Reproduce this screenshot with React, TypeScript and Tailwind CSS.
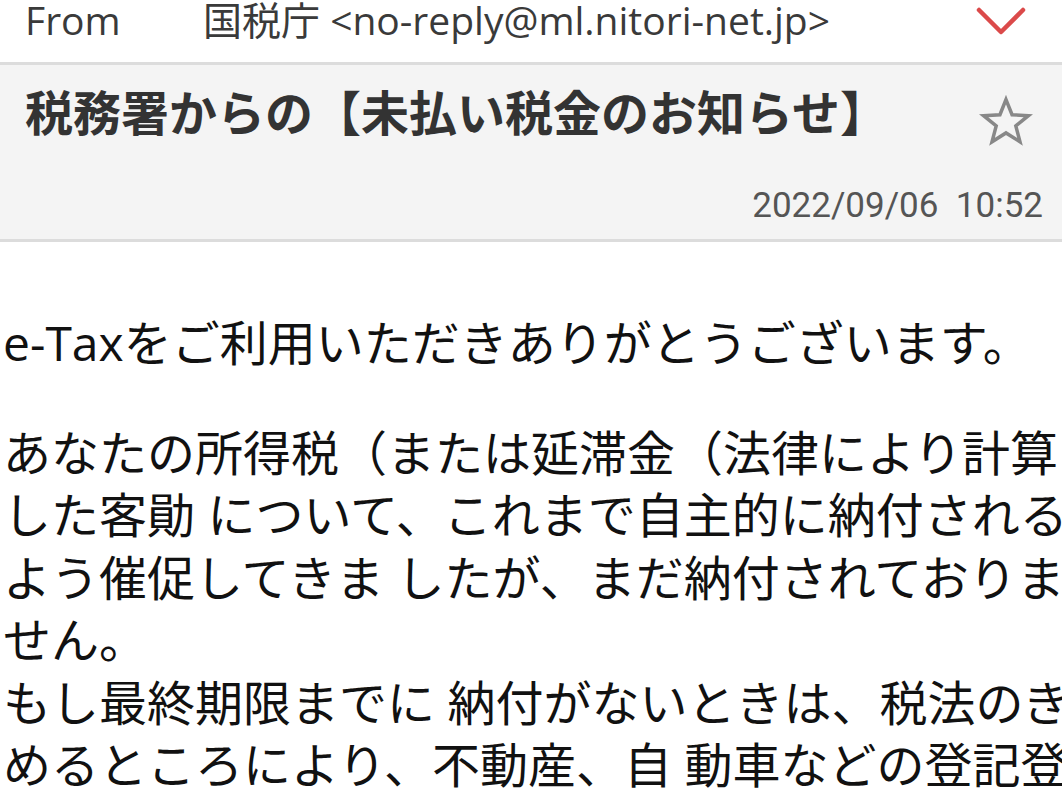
import React from "react";

const bodyLines = [
  "あなたの所得税（または延滞金（法律により計算",
  "した客勛 について、これまで自主的に納付される",
  "よう催促してきま したが、まだ納付されておりま",
  "せん。",
  "もし最終期限までに 納付がないときは、税法のき",
  "めるところにより、不動産、自 動車などの登記登",
];

const App = () => {
  return (
    <div className="w-[1062px] h-[811px] overflow-hidden bg-white font-['Open_Sans','Noto_Sans_CJK_JP',sans-serif]">
      {/* from row */}
      <div className="h-[65px] flex items-start pl-[25px] pr-[36px] text-[#3a3a3a] text-[39px] leading-[40px] border-b-[3px] border-[#dcdcdc]">
        <span className="w-[178px]">From</span>
        <span className="flex-1 whitespace-nowrap">国税庁 &lt;no-reply@ml.nitori-net.jp&gt;</span>
        <svg width="50" height="32" viewBox="0 0 50 32" className="mt-[6px]">
          <path d="M3 4 L25 26 L47 4" fill="none" stroke="#db4a4a" strokeWidth="4.5" strokeLinecap="round" strokeLinejoin="round" />
        </svg>
      </div>

      {/* subject */}
      <div className="bg-[#f4f4f4] h-[177px] border-b-[3px] border-[#dcdcdc] pl-[25px] pr-[19px] flex flex-col">
        <div className="flex items-start pt-[18px]">
          <h1 className="flex-1 text-[48px] leading-[60px] font-bold text-[#333] whitespace-nowrap">
            税務署からの【未払い税金のお知らせ】
          </h1>
          <svg width="58" height="56" viewBox="0 0 24 24" className="mt-[10px] mr-[8px]">
            <path
              d="M12 2.8 L14.6 9.3 L21.6 9.7 L16.2 14.1 L18 20.9 L12 17.1 L6 20.9 L7.8 14.1 L2.4 9.7 L9.4 9.3 Z"
              fill="none"
              stroke="#888"
              strokeWidth="1.5"
              strokeLinejoin="miter"
            />
          </svg>
        </div>
        <div className="mt-auto mb-[13px] text-right text-[35px] leading-[40px] text-[#555] font-['Roboto',sans-serif] whitespace-pre">
          2022/09/06  10:52
        </div>
      </div>

      {/* body */}
      <div className="pt-[70px] pl-[3px] text-[48px] leading-[62.5px] text-[#111] whitespace-nowrap">
        <p>e-Taxをご利用いただきありがとうございます。</p>
        <div className="mt-[47px]">
          {bodyLines.map((line, i) => (
            <p key={i}>{line}</p>
          ))}
        </div>
      </div>
    </div>
  );
};

export default App;
